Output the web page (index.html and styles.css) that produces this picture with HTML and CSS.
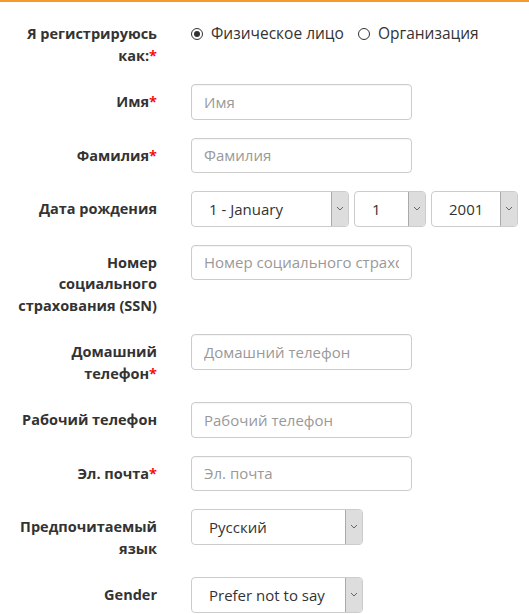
FILE: index.html
```html
<!DOCTYPE html>
<html lang="ru">
<head>
<meta charset="utf-8">
<title>Регистрация</title>
<link rel="stylesheet" href="styles.css">
</head>
<body>
<div class="topbar"></div>
<form class="form">
  <div class="row">
    <label class="label">Я регистрируюсь как:<span class="req">*</span></label>
    <div class="field radios">
      <label class="radio"><span class="dot checked"></span>Физическое лицо</label>
      <label class="radio"><span class="dot"></span>Организация</label>
    </div>
  </div>
  <div class="row">
    <label class="label">Имя<span class="req">*</span></label>
    <div class="field"><input class="input" type="text" placeholder="Имя"></div>
  </div>
  <div class="row">
    <label class="label">Фамилия<span class="req">*</span></label>
    <div class="field"><input class="input" type="text" placeholder="Фамилия"></div>
  </div>
  <div class="row">
    <label class="label">Дата рождения</label>
    <div class="field dates">
      <div class="select month"><select><option>1 - January</option></select><span class="arrow"><svg width="8" height="5" viewBox="0 0 8 5"><path d="M1 1l3 3 3-3" fill="none" stroke="#666" stroke-width="1"/></svg></span></div>
      <div class="select day"><select><option>1</option></select><span class="arrow"><svg width="8" height="5" viewBox="0 0 8 5"><path d="M1 1l3 3 3-3" fill="none" stroke="#666" stroke-width="1"/></svg></span></div>
      <div class="select year"><select><option>2001</option></select><span class="arrow"><svg width="8" height="5" viewBox="0 0 8 5"><path d="M1 1l3 3 3-3" fill="none" stroke="#666" stroke-width="1"/></svg></span></div>
    </div>
  </div>
  <div class="row">
    <label class="label">Номер социального страхования (SSN)</label>
    <div class="field"><input class="input" type="text" placeholder="Номер социального страхования"></div>
  </div>
  <div class="row">
    <label class="label">Домашний телефон<span class="req">*</span></label>
    <div class="field"><input class="input" type="text" placeholder="Домашний телефон"></div>
  </div>
  <div class="row">
    <label class="label">Рабочий телефон</label>
    <div class="field"><input class="input" type="text" placeholder="Рабочий телефон"></div>
  </div>
  <div class="row">
    <label class="label">Эл. почта<span class="req">*</span></label>
    <div class="field"><input class="input" type="text" placeholder="Эл. почта"></div>
  </div>
  <div class="row">
    <label class="label">Предпочитаемый язык</label>
    <div class="field">
      <div class="select wide"><select><option>Русский</option></select><span class="arrow"><svg width="8" height="5" viewBox="0 0 8 5"><path d="M1 1l3 3 3-3" fill="none" stroke="#666" stroke-width="1"/></svg></span></div>
    </div>
  </div>
  <div class="row">
    <label class="label">Gender</label>
    <div class="field">
      <div class="select wide"><select><option>Prefer not to say</option></select><span class="arrow"><svg width="8" height="5" viewBox="0 0 8 5"><path d="M1 1l3 3 3-3" fill="none" stroke="#666" stroke-width="1"/></svg></span></div>
    </div>
  </div>
</form>
</body>
</html>
```
FILE: styles.css
```css
* { box-sizing: border-box; }
html, body { margin: 0; padding: 0; background: #fff; }
body {
  font-family: "Open Sans", "Liberation Sans", sans-serif;
  font-size: 15px;
  line-height: 21.5px;
  color: #333;
  overflow: hidden;
}
.topbar { height: 2px; background: #f49b2b; }
.form { padding: 14px 0 0 12px; }
.row {
  display: grid;
  grid-template-columns: 145px 1fr;
  column-gap: 34px;
  margin-bottom: 18px;
  align-items: start;
}
.label {
  text-align: right;
  font-weight: 700;
  font-size: 14.5px;
  line-height: 21.5px;
  padding-top: 7px;
  color: #333;
}
.req { color: #ee1111; }
.radios {
  display: flex;
  gap: 14px;
  padding-top: 7px;
  font-size: 15.5px;
}
.radio { display: flex; align-items: center; gap: 8px; }
.dot {
  width: 12px;
  height: 12px;
  border: 1.5px solid #333;
  border-radius: 50%;
  display: inline-flex;
  align-items: center;
  justify-content: center;
}
.dot.checked::after {
  content: "";
  width: 6px;
  height: 6px;
  border-radius: 50%;
  background: #333;
}
.input {
  display: block;
  width: 221px;
  height: 35.5px;
  border: 1px solid #ccc;
  border-radius: 4px;
  padding: 6px 12px;
  font-family: inherit;
  font-size: 15px;
  color: #333;
  outline: none;
  box-shadow: inset 0 1px 1px rgba(0,0,0,0.04);
}
.input::placeholder { color: #999; }
.dates { display: flex; gap: 5px; }
.select {
  position: relative;
  height: 35.5px;
  border: 1px solid #ccc;
  border-radius: 4px;
  overflow: hidden;
  background: #fff;
}
.select select {
  display: block;
  -webkit-appearance: none;
  appearance: none;
  border: 0;
  width: 100%;
  height: 100%;
  padding: 0 20px 0 17px;
  font-family: inherit;
  font-size: 15px;
  color: #333;
  background: transparent;
  outline: none;
}
.arrow {
  position: absolute;
  right: 0;
  top: 0;
  bottom: 0;
  width: 17px;
  background: #ddd;
  border-left: 1px solid #aaa;
  display: flex;
  align-items: center;
  justify-content: center;
  pointer-events: none;
}
.month { width: 158px; }
.day { width: 72px; }
.year { width: 87px; }
.wide { width: 172px; }
```
